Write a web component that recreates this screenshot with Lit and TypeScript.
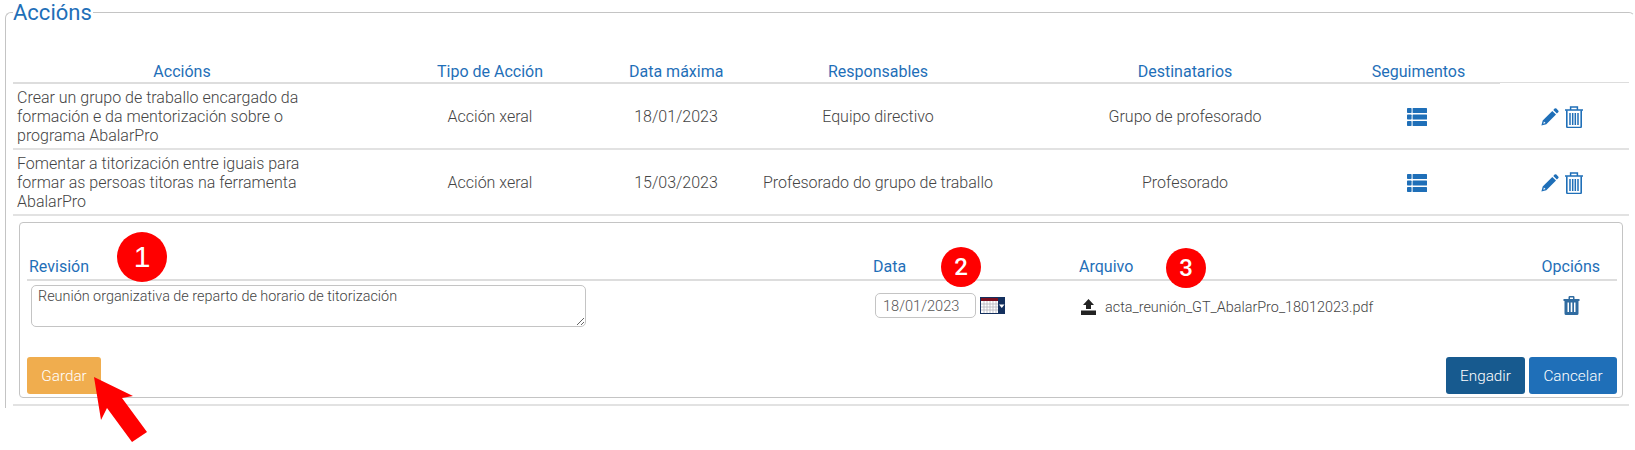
import { LitElement, html, css } from "lit";
import { customElement } from "lit/decorators.js";

const listIcon = html`<svg class="list" viewBox="0 0 20 18" width="20" height="18"><g fill="#1f6fb8"><rect x="0" y="0" width="4.6" height="5" rx=".7"/><rect x="5.6" y="0" width="14.4" height="5" rx=".5"/><rect x="0" y="6.5" width="4.6" height="5" rx=".7"/><rect x="5.6" y="6.5" width="14.4" height="5" rx=".5"/><rect x="0" y="13" width="4.6" height="5" rx=".7"/><rect x="5.6" y="13" width="14.4" height="5" rx=".5"/></g></svg>`;
const pencil = html`<svg viewBox="0 0 18 18" width="18" height="18"><path fill="#1f6fb8" fill-rule="evenodd" d="M13.6 .6a1.3 1.3 0 0 1 1.8 0L17.2 2.4a1.3 1.3 0 0 1 0 1.8L15.9 5.5 12.3 1.9ZM11.3 2.9 15 6.6 5.3 16.3 .4 17.6 1.7 12.6ZM2.9 13.4 2.3 15.7 4.6 15.1Z"/></svg>`;
const trash = html`<svg viewBox="0 0 18 22" width="18" height="22"><g fill="none" stroke="#1f6fb8" stroke-width="1.5"><path d="M0 4H18M5.6 3.8V1.1H12.4V3.8"/><path d="M1.8 4.3V20.6a.9 .9 0 0 0 .9 .9H15.3a.9 .9 0 0 0 .9-.9V4.3" stroke-width="1.6"/><path d="M5 7V19M7.7 7V19M10.3 7V19M13 7V19"/></g></svg>`;

const rows = [
  { a: ["Crear un grupo de traballo encargado da", "formación e da mentorización sobre o", "programa AbalarPro"], d: "18/01/2023", r: "Equipo directivo", t: "Grupo de profesorado" },
  { a: ["Fomentar a titorización entre iguais para", "formar as persoas titoras na ferramenta", "AbalarPro"], d: "15/03/2023", r: "Profesorado do grupo de traballo", t: "Profesorado" },
];

@customElement("app-root")
export class AppRoot extends LitElement {
  static styles = css`
    :host { display: block; width: 1635px; height: 450px; overflow: hidden; position: relative; background: #fff;
      font-family: Roboto, "Liberation Sans", sans-serif; font-weight: 300; font-size: 16px; color: #444; box-sizing: border-box; padding: 12px 0 0 5px; }
    .field { border-top: 1px solid #c4c4c4; border-left: 1px solid #c4c4c4; border-right: 1px solid transparent; border-top-left-radius: 6px; border-top-right-radius: 6px; height: 396px; padding: 0 6px 0 7px; box-sizing: border-box; }
    .legend { display: block; width: max-content; margin-top: -13px; background: #fff; padding-right: 1px; color: #1f6fb8; font-size: 22px; line-height: 26px; font-weight: 400; }
    .grid { display: grid; grid-template-columns: 338px 278px 94px 310px 304px 163px 129px; width: 1616px; }
    .head { margin-top: 31px; color: #1f6fb8; font-weight: 400; line-height: 26px; text-align: center; white-space: nowrap; }
    .head > div { border-bottom: 2px solid #ddd; height: 23px; padding-top: 2px; }
    .head > div:last-child { border-bottom: 1px solid #ddd; }
    .row { height: 66px; border-bottom: 2px solid #e2e2e2; box-sizing: border-box; align-items: center; text-align: center; white-space: nowrap; }
    .row .txt { text-align: left; padding-left: 4px; line-height: 19px; }
    .icons { display: flex; gap: 6px; justify-content: center; align-items: center; margin-left: -6px; margin-top: 1px; }
    .list { display: block; margin: 1px auto 0; position: relative; left: -2px; }
    .box { margin: 6px 0 0 6px; width: 1604px; height: 176px; border: 1px solid #c4c4c4; border-radius: 4px; box-sizing: border-box; padding: 24px 5px 3px 7px; display: flex; flex-direction: column; }
    .bgrid { display: grid; grid-template-columns: 844px 206px 464px 1fr; }
    .bhead { color: #1f6fb8; font-weight: 400; line-height: 20px; height: 34px; box-sizing: border-box; border-bottom: 2px solid #ddd; white-space: nowrap; }
    .bhead > div { padding: 10px 0 0 2px; }
    .bhead > div:last-child { text-align: right; padding: 10px 17px 0 0; }
    .brow { margin-top: 4px; height: 42px; }
    textarea { display: block; font: 300 14.4px/16px Roboto, sans-serif; color: #444; width: 555px; height: 42px; margin: 0 0 0 4px; border: 1px solid #c4c4c4; border-radius: 5px; padding: 3px 6px; box-sizing: border-box; outline: none; }
    .date { display: flex; align-items: center; gap: 4px; margin: 8px 0 0 4px; height: 25px; }
    input { font: 300 14.6px Roboto, sans-serif; color: #555; width: 101px; height: 25px; border: 1px solid #c4c4c4; border-radius: 5px; padding: 0 7px; box-sizing: border-box; outline: none; }
    .file { display: flex; align-items: center; gap: 9px; margin: 11px 0 0 4px; height: 22px; font-size: 14.4px; white-space: nowrap; }
    .del { display: flex; justify-content: flex-end; padding: 11px 37px 0 0; }
    .actions { display: flex; margin-top: auto; gap: 4px; }
    button { font: 300 15.3px Roboto, sans-serif; color: #fff; height: 37px; border: none; border-radius: 3px; padding: 0; }
    .save { background: #f0ad4e; width: 74px; margin-right: auto; }
    .add { background: #175a8f; width: 79px; }
    .cancel { background: #1f6fb8; width: 88px; }
    .rule { margin: 6px 0 0 0; height: 2px; width: 1616px; background: #e2e2e2; }
    .badge { position: absolute; background: #f00; color: #fff; border-radius: 50%; display: flex; align-items: center; justify-content: center; font: 500 24px Roboto, sans-serif; }
    .b1 { left: 117px; top: 232px; width: 50px; height: 50px; font: 400 30px "Liberation Sans", sans-serif; }
    .b2 { left: 941px; top: 247px; width: 40px; height: 40px; }
    .b3 { left: 1166px; top: 248px; width: 40px; height: 40px; }
    .arrow { position: absolute; left: 90px; top: 370px; }
  `;

  render() {
    return html`
      <div class="field">
        <div class="legend">Accións</div>
        <div class="grid head">
          <div>Accións</div><div>Tipo de Acción</div><div>Data máxima</div><div>Responsables</div><div>Destinatarios</div><div>Seguimentos</div><div></div>
        </div>
        ${rows.map(r => html`
          <div class="grid row">
            <div class="txt">${r.a.map(l => html`${l}<br />`)}</div>
            <div>Acción xeral</div><div>${r.d}</div><div>${r.r}</div><div>${r.t}</div>
            <div>${listIcon}</div>
            <div class="icons">${pencil}${trash}</div>
          </div>`)}
        <div class="box">
          <div class="bgrid bhead"><div>Revisión</div><div>Data</div><div>Arquivo</div><div>Opcións</div></div>
          <div class="bgrid brow">
            <textarea .value=${"Reunión organizativa de reparto de horario de titorización"}></textarea>
            <div class="date"><input .value=${"18/01/2023"} />
              <svg viewBox="0 0 25 17" width="25" height="17"><rect width="25" height="17" fill="#14305e"/><rect x="1" y="1" width="17" height="3" fill="#7a1020"/><rect x="1" y="4" width="17" height="12" fill="#fff"/><path d="M1 7H18M1 10H18M1 13H18M4 4V16M7 4V16M10 4V16M13 4V16M16 4V16" stroke="#b4b4bc" stroke-width=".8"/><path d="M19 7.5H24.5L21.75 11Z" fill="#fff"/></svg>
            </div>
            <div class="file">
              <svg viewBox="0 0 15 16" width="15" height="16"><path fill="#222" d="M7.5 0 13 6H10V10H5V6H2ZM0 11.5H15V16H0Z"/></svg>
              <span>acta_reunión_GT_AbalarPro_18012023.pdf</span>
            </div>
            <div class="del"><svg viewBox="0 0 16 19" width="17" height="19"><path fill="#2f6ba0" fill-rule="evenodd" d="M0 3H5V1.2Q5 0 6.2 0H9.8Q11 0 11 1.2V3H16V5H15V17.5Q15 19 13.5 19H2.5Q1 19 1 17.5V5H0ZM6.5 3H9.5V1.5H6.5ZM4 6.5V16H5.5V6.5ZM7.2 6.5V16H8.8V6.5ZM10.5 6.5V16H12V6.5Z"/></svg></div>
          </div>
          <div class="actions">
            <button class="save">Gardar</button>
            <button class="add">Engadir</button>
            <button class="cancel">Cancelar</button>
          </div>
        </div>
        <div class="rule"></div>
      </div>
      <div class="badge b1">1</div>
      <div class="badge b2">2</div>
      <div class="badge b3">3</div>
      <svg class="arrow" width="65" height="80" viewBox="90 370 65 80"><polygon fill="#f00" points="94,377 133,396 122,398 147,432 132,442 107,408 101,420"/></svg>
    `;
  }
}
